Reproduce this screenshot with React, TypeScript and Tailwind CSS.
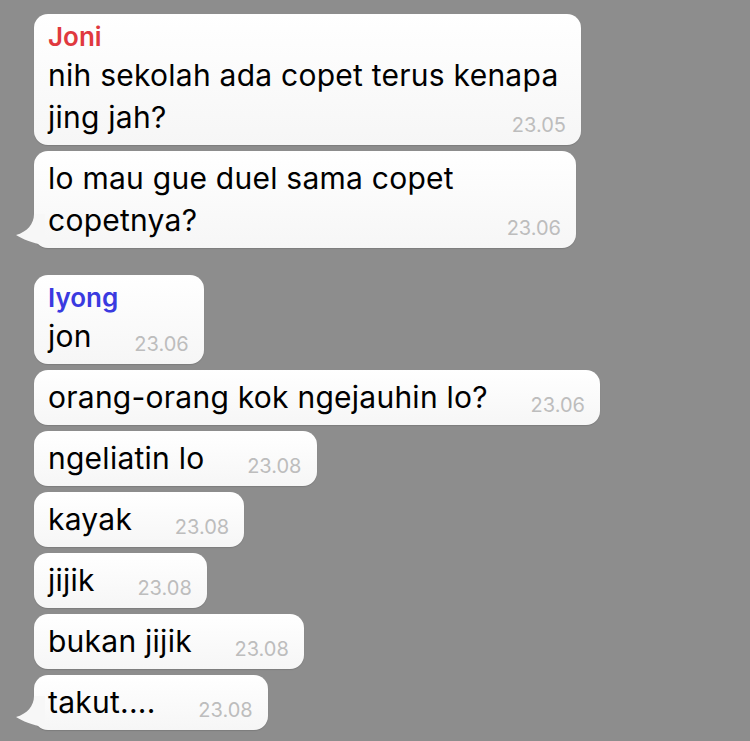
type Msg = { name?: string; color?: string; lines: string[]; time: string; tail?: boolean; w?: string };

const groups: Msg[][] = [
  [
    { name: "Joni", color: "text-[#e0393e]", lines: ["nih sekolah ada copet terus kenapa", "jing jah?"], time: "23.05", w: "w-[547px]" },
    { lines: ["lo mau gue duel sama copet", "copetnya?"], time: "23.06", tail: true, w: "w-[542px]" },
  ],
  [
    { name: "Iyong", color: "text-[#3a3ae0]", lines: ["jon"], time: "23.06" },
    { lines: ["orang-orang kok ngejauhin lo?"], time: "23.06" },
    { lines: ["ngeliatin lo"], time: "23.08" },
    { lines: ["kayak"], time: "23.08" },
    { lines: ["jijik"], time: "23.08" },
    { lines: ["bukan jijik"], time: "23.08" },
    { lines: ["takut...."], time: "23.08", tail: true },
  ],
];

function Bubble({ m }: { m: Msg }) {
  return (
    <div
      className={`relative ${m.w ?? "w-fit"} rounded-[14px] bg-gradient-to-b from-white to-[#f6f6f6] px-[14px] pt-[6px] pb-[7px] shadow-[0_1px_1px_rgba(0,0,0,0.12)]`}
    >
      {m.tail && (
        <svg className="absolute -left-[19px] bottom-0" width="30" height="34" viewBox="0 0 30 34">
          <path d="M19 0 C19 10 12 18 1 21 C8 25 16 29 30 31 L30 0 Z" fill="#f7f7f7" />
        </svg>
      )}
      {m.name && (
        <div className={`relative text-[26px] leading-[34px] font-semibold ${m.color}`}>{m.name}</div>
      )}
      <div className="relative text-[30px] leading-[42px] tracking-[0.25px] text-black">
        {m.lines.map((l, i) => (
          <div key={i}>
            {l}
            {i === m.lines.length - 1 && <span className="inline-block w-[98px]" />}
          </div>
        ))}
      </div>
      <span className="absolute right-[15px] bottom-[8px] text-[20px] leading-[24px] text-[#bdbdbd]">{m.time}</span>
    </div>
  );
}

export default function App() {
  return (
    <div
      className="min-h-[741px] w-[750px] bg-[#8d8d8d] pt-[14px] pl-[34px] flex flex-col gap-[27px]"
      style={{ fontFamily: "Inter, 'Liberation Sans', sans-serif" }}
    >
      {groups.map((g, gi) => (
        <div key={gi} className="flex flex-col gap-[6px]">
          {g.map((m, i) => (
            <Bubble key={i} m={m} />
          ))}
        </div>
      ))}
    </div>
  );
}
